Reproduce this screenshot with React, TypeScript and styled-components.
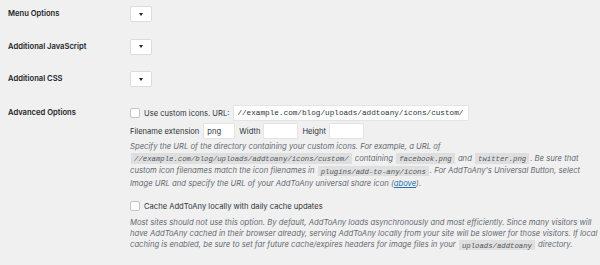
import React from "react";
import styled, { createGlobalStyle } from "styled-components";

const Global = createGlobalStyle`
  html, body { margin: 0; padding: 0; background: #f0f0f1; }
  body { font-family: Inter, "Noto Sans", sans-serif; font-size: 8px; color: #1d2327; }
`;

const Table = styled.div`
  display: flex;
  flex-direction: column;
`;

const Row = styled.div<{ $pt?: number; $pb?: number }>`
  display: grid;
  grid-template-columns: 130px 1fr;
  padding: ${(p) => p.$pt ?? 6}px 0 ${(p) => p.$pb ?? 10.5}px;
`;

const Label = styled.div`
  padding-left: 8px;
  font-weight: 600;
  font-size: 7.6px;
  line-height: 16px;
  color: #1d2327;
`;

const Cell = styled.div`
  display: flex;
  flex-direction: column;
  align-items: flex-start;
`;

const ToggleButton = styled.button`
  width: 22px;
  height: 16px;
  padding: 0;
  margin: 0;
  background: #fff;
  border: 1px solid #dcdcde;
  border-radius: 2px;
  display: flex;
  align-items: center;
  justify-content: center;
  box-sizing: border-box;
  &::after {
    content: "";
    width: 0;
    height: 0;
    border-left: 2.5px solid transparent;
    border-right: 2.5px solid transparent;
    border-top: 3px solid #1d2327;
  }
`;

const Line = styled.div<{ $mt?: number }>`
  display: flex;
  align-items: center;
  height: 16px;
  margin-top: ${(p) => p.$mt ?? 0}px;
  font-size: 7.6px;
  color: #2c3338;
`;

const Check = styled.span`
  width: 10px;
  height: 10px;
  box-sizing: border-box;
  background: #fff;
  border: 1px solid #c3c4c7;
  border-radius: 2px;
  margin-right: 4px;
  flex: none;
`;

const Input = styled.span<{ $w: number; $mono?: boolean; $ml?: number; $mr?: number }>`
  display: inline-flex;
  align-items: center;
  box-sizing: border-box;
  width: ${(p) => p.$w}px;
  height: 16px;
  margin-left: ${(p) => p.$ml ?? 0}px;
  margin-right: ${(p) => p.$mr ?? 0}px;
  padding: 0 3px;
  background: #fff;
  border: 1px solid #e4e4e6;
  border-radius: 1px;
  overflow: hidden;
  white-space: nowrap;
  font-family: ${(p) => (p.$mono ? '"Liberation Mono", "DejaVu Sans Mono", monospace' : 'Inter, "Noto Sans", sans-serif')};
  font-size: ${(p) => (p.$mono ? "7.7px" : "7.6px")};
  color: #2c3338;
`;

const Desc = styled.div<{ $mt?: number; $lh?: number }>`
  margin-top: ${(p) => p.$mt ?? 0}px;
  font-style: italic;
  font-size: 7.7px;
  line-height: ${(p) => p.$lh ?? 11}px;
  color: #646970;
  white-space: nowrap;
`;

const Code = styled.code`
  font-family: "Liberation Mono", "DejaVu Sans Mono", monospace;
  font-size: 7.3px;
  background: rgba(0, 0, 0, 0.07);
  padding: 1.5px 3px 1px;
  margin: 0 1px;
  color: #50575e;
`;

const A = styled.a`
  color: #2271b1;
  text-decoration: underline;
`;

export default function App() {
  return (
    <>
      <Global />
      <Table>
        <Row>
          <Label>Menu Options</Label>
          <Cell>
            <ToggleButton />
          </Cell>
        </Row>
        <Row>
          <Label>Additional JavaScript</Label>
          <Cell>
            <ToggleButton />
          </Cell>
        </Row>
        <Row>
          <Label>Additional CSS</Label>
          <Cell>
            <ToggleButton />
          </Cell>
        </Row>
        <Row $pt={7.5} $pb={0}>
          <Label>Advanced Options</Label>
          <Cell>
            <Line>
              <Check />
              Use custom icons. URL:
              <Input $w={236} $mono $ml={4}>
                //example.com/blog/uploads/addtoany/icons/custom/
              </Input>
            </Line>
            <Line $mt={2}>
              Filename extension
              <Input $w={32} $ml={4} $mr={4}>png</Input>
              Width
              <Input $w={35} $ml={3} $mr={4}>{""}</Input>
              Height
              <Input $w={35} $ml={3}>{""}</Input>
            </Line>
            <Desc $mt={2} $lh={11.5}>
              Specify the URL of the directory containing your custom icons. For example, a URL of
              <br />
              <Code>//example.com/blog/uploads/addtoany/icons/custom/</Code> containing{" "}
              <Code>facebook.png</Code> and <Code>twitter.png</Code>. Be sure that
              <br />
              custom icon filenames match the icon filenames in <Code>plugins/add-to-any/icons</Code>.
              For AddToAny's Universal Button, select
              <br />
              Image URL and specify the URL of your AddToAny universal share icon (<A>above</A>).
            </Desc>
            <Line $mt={9.3}>
              <Check />
              Cache AddToAny locally with daily cache updates
            </Line>
            <Desc $mt={3.2}>
              Most sites should not use this option. By default, AddToAny loads asynchronously and most
              efficiently. Since many visitors will
              <br />
              have AddToAny cached in their browser already, serving AddToAny locally from your site will be
              slower for those visitors. If local
              <br />
              caching is enabled, be sure to set far future cache/expires headers for image files in your{" "}
              <Code>uploads/addtoany</Code> directory.
            </Desc>
          </Cell>
        </Row>
      </Table>
    </>
  );
}
